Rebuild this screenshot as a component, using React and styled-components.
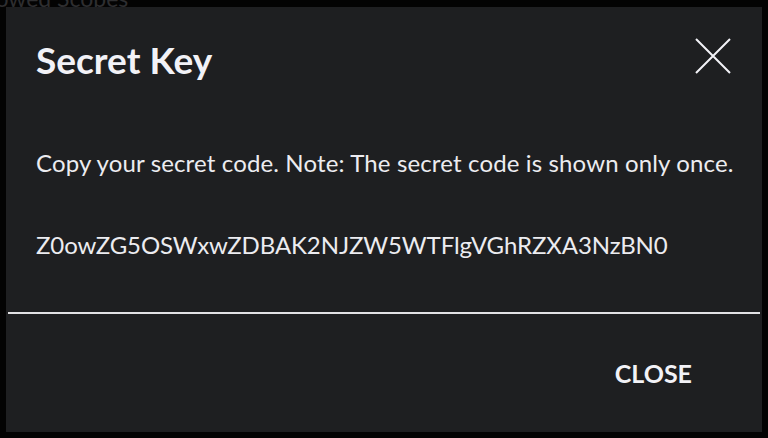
import styled, { createGlobalStyle } from "styled-components";

const GlobalStyle = createGlobalStyle`
  html, body {
    margin: 0;
    padding: 0;
    background: #030303;
  }
  body {
    font-family: Lato, "Noto Sans", sans-serif;
    -webkit-font-smoothing: antialiased;
  }
`;

const Backdrop = styled.div`
  width: 768px;
  height: 438px;
  box-sizing: border-box;
  padding: 0 6px 6px 6px;
  display: flex;
  flex-direction: column;
  overflow: hidden;
`;

// the page under the overlay, only its last line peeks out at the top
const BehindStrip = styled.div`
  height: 7px;
  overflow: hidden;
  margin-left: -6px;
`;

const BehindText = styled.p`
  margin: -14px 0 0 -31px;
  font-size: 23px;
  line-height: 24px;
  white-space: nowrap;
  color: #2e2e30;
`;

const Dialog = styled.section`
  flex: 1;
  background: #1e1f21;
  display: flex;
  flex-direction: column;
`;

const Header = styled.header`
  display: flex;
  align-items: flex-start;
  justify-content: space-between;
  padding: 31px 31px 0 30px;
`;

const Title = styled.h2`
  margin: 0;
  font-size: 37px;
  font-weight: 700;
  color: #f2f2f7;
  line-height: 44px;
`;

const IconButton = styled.button`
  background: none;
  border: 0;
  padding: 0;
  width: 36px;
  height: 36px;
  display: flex;
  cursor: pointer;
`;

const Body = styled.div`
  padding: 67px 30px 0 30px;
  display: flex;
  flex-direction: column;
  gap: 54px;
  flex: 1;
`;

const Text = styled.p`
  margin: 0;
  font-size: 24px;
  line-height: 28px;
  letter-spacing: ${(props) => props.$spacing || "0"};
  white-space: nowrap;
  color: #ececf0;
`;

const Footer = styled.footer`
  margin: 0 2px;
  border-top: 2px solid #e2e2e4;
  height: 120px;
  box-sizing: border-box;
  display: flex;
  align-items: center;
  justify-content: flex-end;
  padding-right: 68px;
`;

const TextButton = styled.button`
  background: none;
  border: 0;
  padding: 0;
  font-family: Lato, "Noto Sans", sans-serif;
  font-size: 25px;
  font-weight: 700;
  color: #f2f2f7;
  cursor: pointer;
`;

const CloseIcon = () => (
  <svg width="36" height="36" viewBox="0 0 36 36">
    <path d="M1 1 L35 35 M35 1 L1 35" stroke="#f2f2f7" strokeWidth="2" fill="none" />
  </svg>
);

const App = () => {
  const secret = "Z0owZG5OSWxwZDBAK2NJZW5WTFlgVGhRZXA3NzBN0";

  return (
    <>
      <GlobalStyle />
      <Backdrop>
        <BehindStrip>
          <BehindText>Allowed Scopes</BehindText>
        </BehindStrip>
        <Dialog>
          <Header>
            <Title>Secret Key</Title>
            <IconButton aria-label="close">
              <CloseIcon />
            </IconButton>
          </Header>
          <Body>
            <Text $spacing="0.14px">
              Copy your secret code. Note: The secret code is shown only once.
            </Text>
            <Text $spacing="-0.1px">{secret}</Text>
          </Body>
          <Footer>
            <TextButton>CLOSE</TextButton>
          </Footer>
        </Dialog>
      </Backdrop>
    </>
  );
};

export default App;
